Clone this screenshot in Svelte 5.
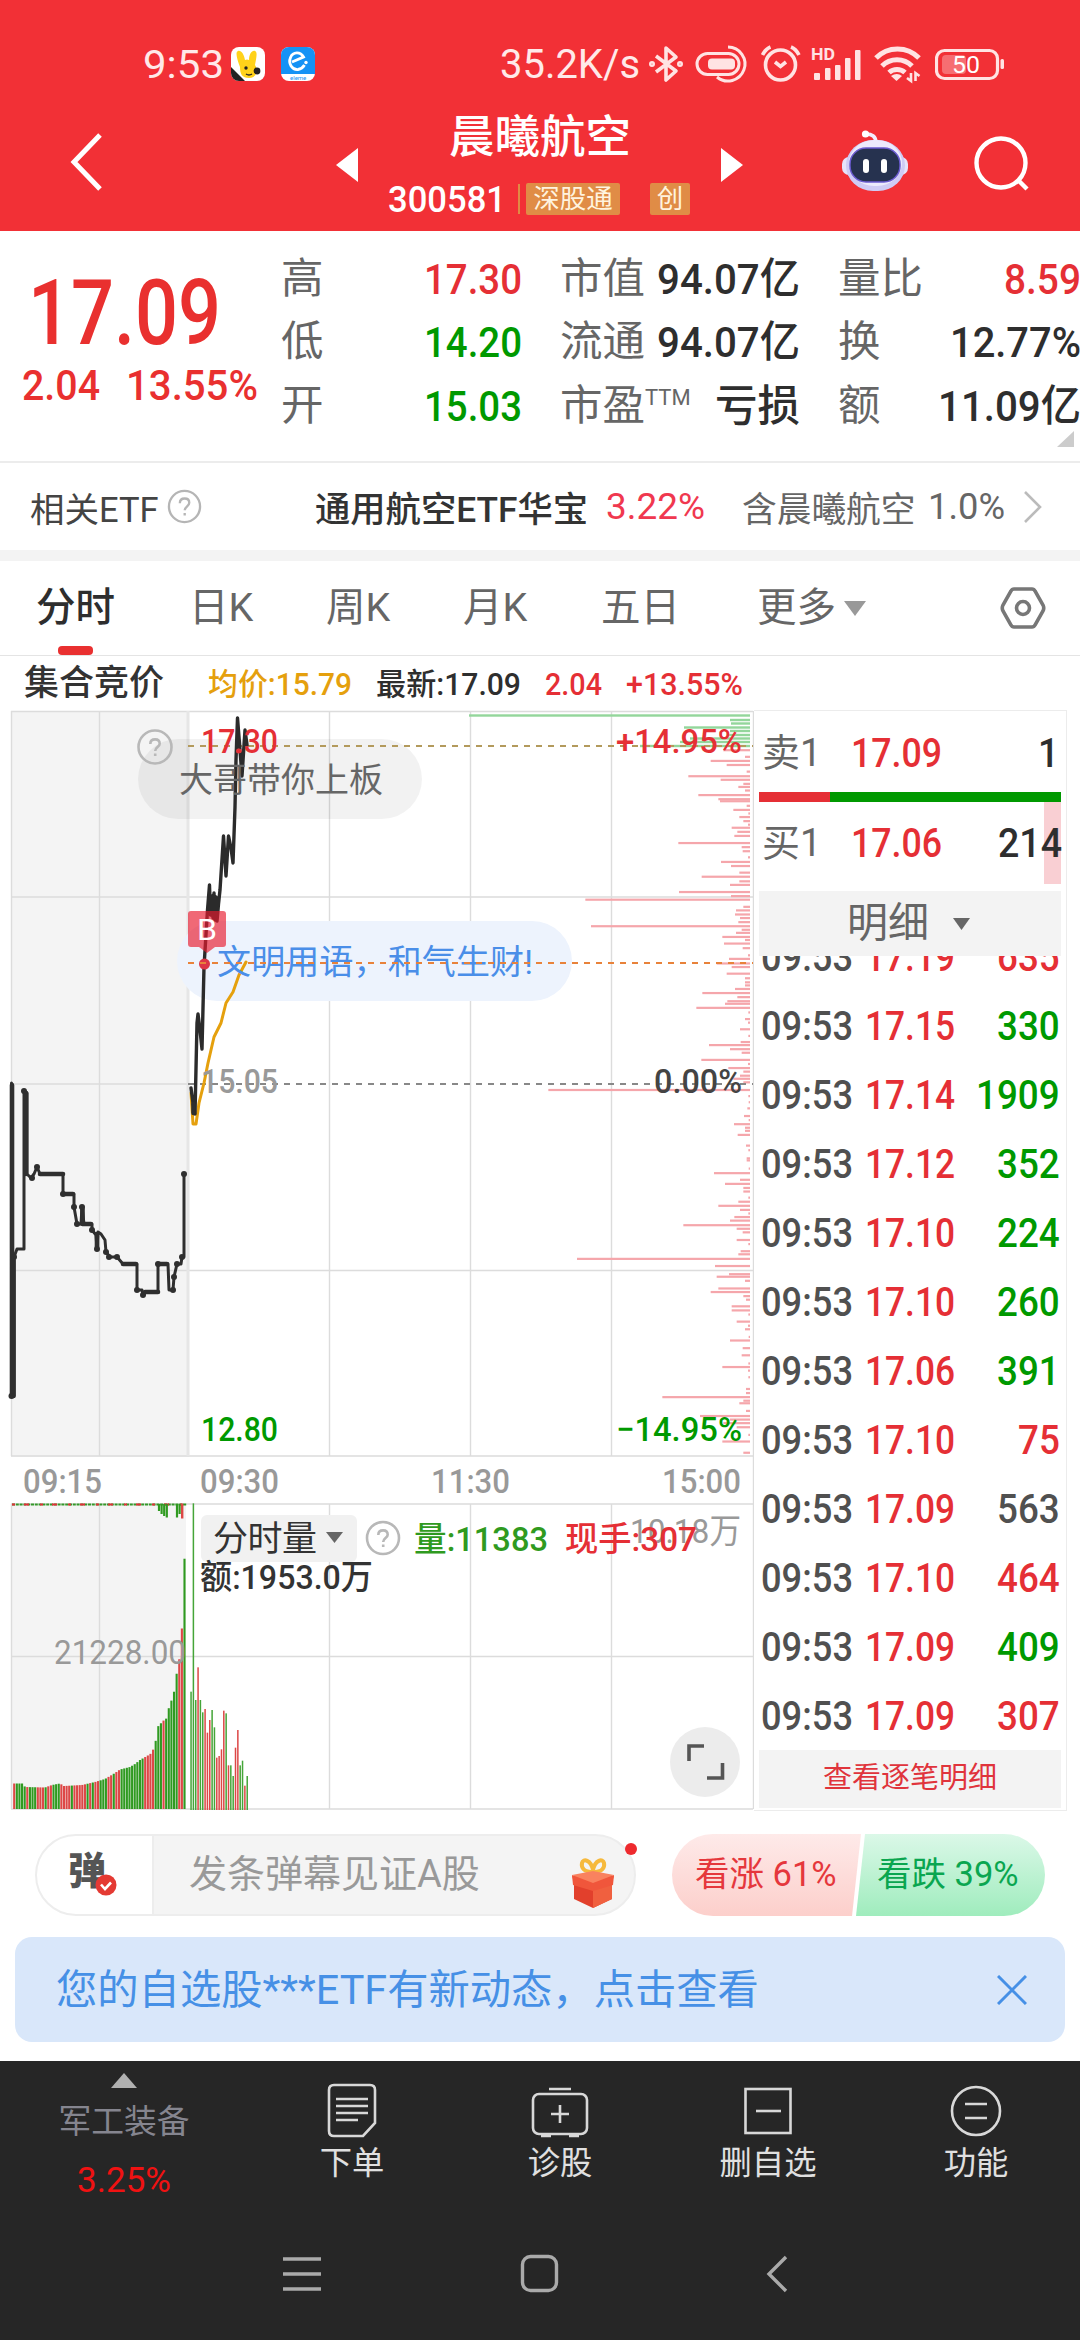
<script lang="ts">
type Tone = "up" | "down" | "flat";

interface Quote {
	label: string;
	sup?: string;
	value: string;
	width: number;
	tone: Tone;
}

const quoteColumns: Quote[][] = [
	[
		{ label: "高", value: "17.30", width: 98, tone: "up" },
		{ label: "低", value: "14.20", width: 98, tone: "down" },
		{ label: "开", value: "15.03", width: 98, tone: "down" },
	],
	[
		{ label: "市值", value: "94.07亿", width: 143, tone: "flat" },
		{ label: "流通", value: "94.07亿", width: 143, tone: "flat" },
		{ label: "市盈", sup: "TTM", value: "亏损", width: 85, tone: "flat" },
	],
	[
		{ label: "量比", value: "8.59", width: 77, tone: "up" },
		{ label: "换", value: "12.77%", width: 131, tone: "flat" },
		{ label: "额", value: "11.09亿", width: 143, tone: "flat" },
	],
];

const tabs = ["分时", "日K", "周K", "月K", "五日"];

const trades: [string, number, Tone][] = [
	["17.19", 635, "up"],
	["17.15", 330, "down"],
	["17.14", 1909, "down"],
	["17.12", 352, "down"],
	["17.10", 224, "down"],
	["17.10", 260, "down"],
	["17.06", 391, "down"],
	["17.10", 75, "up"],
	["17.09", 563, "flat"],
	["17.10", 464, "up"],
	["17.09", 409, "down"],
	["17.09", 307, "up"],
];

// price / average lines, in page units (the chart viewBox starts at y=710)
const auctionLine =
	"11.5,1083 11.5,1396 14,1396 14,1257 17,1249 24,1249 24,1091 27,1093 27,1174 31,1178 34,1174 37,1167 40,1174 63,1174 63,1194 74,1194 74,1207 77,1224 81,1224 82,1207 84,1224 92,1224 92,1230 96,1235 97,1249 98,1232 101,1234 105,1240 106,1252 110,1257 117,1257 123,1264 137,1264 137,1290 142,1290 143,1295 146,1292 158,1292 158,1264 168,1264 169,1290 173,1290 174,1277 177,1264 181,1264 182,1257 184,1257 184,1174";
const auctionDots = [
	[11.5, 1396], [14, 1257], [24, 1091], [32, 1178], [37, 1167], [63, 1194], [74, 1207], [77, 1224],
	[82, 1207], [92, 1230], [97, 1249], [106, 1252], [109, 1257], [117, 1257], [137, 1290], [143, 1295],
	[158, 1264], [173, 1290], [174, 1277], [177, 1264], [182, 1257], [184, 1174],
];
const priceLine =
	"191,1088 193,1103 195,1114 197,1023 198,1014 200,1030 202,1049 204,967 207.5,910 209.5,885 210.5,915 212,896 213,918 214,893 215,920 216,897 217,921 218.5,904 220,890 223.5,836 226,876 228.5,836 231,848 233,863 235,807 236,760 237.5,718 240,750 242,776 245,730 247,745";
const averageLine =
	"191,1093 193,1124 196,1124 199,1103 204,1083 208,1063 214,1037 221,1023 226,1003 233,992 239,975 246,962";

// chip distribution: [y, left edge]
const chipsGreen = [
	[715.5, 469], [720, 730], [723.5, 731], [727.5, 684], [731, 730], [735, 728], [738.5, 690], [742, 680], [746, 640],
];
const chipsRaw =
	"118:970 131:1035 139:932 147:980 160:1040 169:865 176:962 184:1030 190:1015 197:1035 206:895 214:955 218:960 227:1040 235:1000 242:1045 249:1018 257:1030 264:1044 270:995 278:1012 286:1003 300:835 308:1025 316:1028 328:1044 337:963 345:993 358:1018 366:905 375:1018 382:990 396:837 404:993 411:556 425:1030 432:1008 440:1005 447:1020 455:1015 463:573 470:1025 476:1008 484:967 490:1035 497:972 506:1028 520:1044 527:987 536:950 543:995 556:980 565:1035 573:1035 579:1035 586:1005 594:907 602:1012 610:982 615:975 623:889 632:1045 645:1035 652:1044 665:1020 678:1045 690:1022 696:927 704:990 711:1025 725:904 733:1044 741:985 748:1030 756:1020 762:1000 769:1030 784:445 796:1045 808:1046 820:1042 835:1032 843:1046 851:1002 858:1035 864:1035 872:1013 893:1038 902:1045 918:1040 922:1040 938:1046 947:942 960:1020 968:975 976:1030 983:1030 995:1045 1003:1015 1011:955 1019:1020 1026:1045 1033:1003 1040:990 1049:850 1056:1010 1063:1028 1078:1010 1086:1045 1100:1022 1106:1015 1115:531 1129:945 1145:987 1150:950 1158:1035 1173:955 1180:932 1188:1030 1195:1038 1208:995 1216:995 1224:1045 1238:1010 1246:1044 1253:1035 1268:1046 1275:990 1290:1028 1304:1025 1320:1045 1327:967 1334:1044 1347:1045 1370:1038 1378:1038 1386:787 1393:1030 1398:1018 1413:1038 1423:900 1430:990 1437:970 1445:1010 1460:1045 1473:967 1495:1030";
const chipsRed = chipsRaw.split(" ").map((pair) => {
	const [y, x] = pair.split(":").map(Number);
	return [690 + y / 1.96, 400 + x / 3];
});

// auction volume, curve anchors interpolated to one bar each 2.62px
const volumeAnchors = [
	[12, 1783.5], [23, 1783.5], [25, 1787], [45, 1787.5], [52, 1785], [60, 1783.5], [64, 1786], [82, 1785], [95, 1782],
	[105, 1779], [115, 1773], [120, 1769.5], [130, 1767], [135, 1764], [140, 1760], [147, 1756], [151, 1753.5],
	[155, 1746], [157.5, 1727], [163, 1721], [167, 1718], [169, 1707], [172, 1699], [174.5, 1690], [177, 1671],
	[179.5, 1658], [182, 1627], [184.6, 1556],
];
const volumeTones = "rgrrggggrgggrrrgrrgggrrrrgrrrrrgrgrrgggrrgrrgggggggggrrrrgggrgggggrrg";

function volumeTop(x: number) {
	for (let i = 1; i < volumeAnchors.length; i++) {
		const [x0, y0] = volumeAnchors[i - 1];
		const [x1, y1] = volumeAnchors[i];
		if (x <= x1) return y0 + ((y1 - y0) * (x - x0)) / (x1 - x0);
	}
	return volumeAnchors[volumeAnchors.length - 1][1];
}

const auctionVolume = Array.from({ length: 66 }, (_, i) => {
	const x = 14.2 + i * 2.62;
	return { x, y: volumeTop(x), up: volumeTones[i + 3] === "r" };
});

const minuteVolume =
	"635g 70g 660g 562r 660g 697g 687r 758r 720r 690g 742g 833r 828r 808r 692r 700g 856r 856g 888g 803r 750r 856g 842g 917r 888g"
		.split(" ")
		.map((s, i) => ({ x: 191 + i * 2.34, y: 1480 + parseInt(s) / 3, up: s.endsWith("r") }));

const unmatched = [
	[159, 1511], [161.6, 1514], [164.2, 1516], [166.8, 1517.5], [177, 1517.5], [179.6, 1514], [184.4, 1505],
];

const actions = ["下单", "诊股", "删自选", "功能"];
</script>

{#snippet num(text: string, width: number, size: number, cls = "")}
  <svg class="num {cls}" {width} height={size * 1.2} viewBox="0 0 {width} {size * 1.2}">
    <text y={size * 0.955} font-size={size} textLength={width} lengthAdjust="spacingAndGlyphs">{text}</text>
  </svg>
{/snippet}

{#snippet help(size: number)}
  <svg class="help" width={size} height={size} viewBox="0 0 36 36">
    <circle cx="18" cy="18" r="16" />
    <path d="M13.2 14.6c0-3 2-4.8 4.9-4.8s4.8 1.8 4.8 4.4c0 3.4-4.6 3.8-4.6 7.6M18.2 24.6v2.6" />
  </svg>
{/snippet}

<main class="screen">
  <header class="header">
    <div class="status">
      <div class="status-left">
        {@render num("9:53", 81, 39)}
        <svg class="app-icon" width="34" height="34" viewBox="0 0 34 34">
          <rect width="34" height="34" rx="8" fill="#fff" />
          <path d="M0 20L14 34H8a8 8 0 0 1-8-8z" fill="#222" />
          <path d="M9 20C6 12 4 5 7 4s6 3 7 9q2-.8 4 0c0-6 3-10 6-9s1 8 0 14c4 6 1 13-6 13S9 27 9 20z" fill="#ffd21a" />
          <circle cx="15" cy="21" r="1.7" fill="#222" /><circle cx="26" cy="24" r="3.4" fill="#222" />
          <path d="M15 27q3 2 6 0" stroke="#222" stroke-width="1.4" fill="none" />
        </svg>
        <svg class="app-icon" width="34" height="34" viewBox="0 0 34 34">
          <rect width="34" height="34" rx="8" fill="#fff" />
          <path d="M0 27V8a8 8 0 0 1 8-8h18a8 8 0 0 1 8 8v19z" fill="#1592f5" />
          <path d="M11 15l11.500-5C19.500 4.500 12 4.500 9.500 10.500S11 23 17 22.500c3-.5 5-2 6.500-4.500" fill="none" stroke="#fff" stroke-width="2.800" />
          <circle cx="25" cy="15.500" r="1.700" fill="#fff" />
          <text x="9" y="33" font-size="6" fill="#1592f5">eleme</text>
        </svg>
      </div>
      <div class="status-right">
        {@render num("35.2K/s", 140, 40)}
        <svg class="gap-bt" width="40" height="42" viewBox="0 0 40 42" fill="none" stroke="#ffe3e3" stroke-width="3.600" stroke-linejoin="round">
          <path d="M8 13l20 15-10 9V5l10 9L8 29" /><circle cx="4" cy="21" r="1.200" /><circle cx="32" cy="21" r="1.200" />
        </svg>
        <svg class="gap-a" width="54" height="42" viewBox="0 0 54 42" fill="none" stroke="#ffe3e3" stroke-width="3">
          <rect x="2" y="10.500" width="42" height="21" rx="10.500" /><path d="M33 4a17 17 0 1 1-11 30" />
          <rect x="13" y="15.500" width="27" height="11" rx="4" fill="#ffe3e3" stroke="none" />
        </svg>
        <svg class="gap-b" width="42" height="42" viewBox="0 0 42 42" fill="none" stroke="#ffe3e3" stroke-width="3.600">
          <circle cx="19.500" cy="22" r="15" /><path d="M14 19l5.500 4.500 5.500-4.500M1.500 12q3-6 8-8M38 12q-3-6-8-8" />
        </svg>
        <svg class="gap-c" width="52" height="42" viewBox="0 0 52 42">
          <g fill="#ffe3e3"><rect x="3" y="30" width="6" height="7" rx="1" /><rect x="14" y="25" width="5.500" height="12" rx="1" /><rect x="24" y="22" width="5.500" height="15" rx="1" /><rect x="34" y="15" width="5.500" height="22" rx="1" /><rect x="44" y="7" width="5.500" height="30" rx="1" /></g>
          <text x="0" y="17" font-size="17" font-weight="700" fill="#ffe3e3" textLength="24" lengthAdjust="spacingAndGlyphs">HD</text>
        </svg>
        <svg class="gap-w" width="48" height="42" viewBox="0 0 48 42" fill="none" stroke="#ffe3e3" stroke-width="5">
          <path d="M2 15a30 30 0 0 1 43 0M8 23a21 21 0 0 1 30 0" />
          <path d="M15 29.500a12 12 0 0 1 16 0" /><path d="M17 33q6-4 11 0l-5.500 5z" fill="#ffe3e3" stroke="none" />
          <path d="M37 30v8l-4-3M41.500 38v-8l4 3" stroke-width="2.600" />
        </svg>
        <svg class="gap-d" width="70" height="42" viewBox="0 0 70 42">
          <rect x="1.500" y="7.500" width="61" height="28" rx="8" fill="none" stroke="#ffe3e3" stroke-width="3.200" />
          <rect x="7" y="12" width="24" height="19" rx="4" fill="#fff" opacity=".3" /><rect x="65.500" y="16" width="3.500" height="10" rx="1.500" fill="#ffe3e3" />
          <text x="17" y="30" font-size="24" fill="#fff" textLength="28" lengthAdjust="spacingAndGlyphs">50</text>
        </svg>
      </div>
    </div>

    <div class="titlebar">
      <svg class="back" width="36" height="62" viewBox="0 0 36 62"><path d="M31 4L5 31l26 27" /></svg>
      <svg class="prev" width="22" height="34" viewBox="0 0 22 34"><path d="M22 0v34L0 17z" /></svg>
      <div class="stock">
        <h1>晨曦航空</h1>
        <div class="code">
          {@render num("300581", 118, 37, "medium")}
          <i class="code-line"></i>
          <span class="tag">深股通</span>
          <span class="tag tag-cy">创</span>
        </div>
      </div>
      <svg class="next" width="22" height="34" viewBox="0 0 22 34"><path d="M0 0v34L22 17z" /></svg>
      <svg class="robot" width="68" height="64" viewBox="0 0 68 64">
        <path d="M35 14C35 7 31 5 25 5" fill="none" stroke="#f4eefe" stroke-width="3.600" stroke-linecap="round" />
        <circle cx="24.500" cy="5" r="3.600" fill="#fff" />
        <rect x="1" y="28" width="66" height="18" rx="7" fill="#e6e3fb" />
        <rect x="5" y="11" width="59" height="51" rx="27" fill="#cfcbf5" />
        <rect x="8" y="11" width="53" height="46" rx="25" fill="#eceafc" />
        <rect x="9" y="19" width="50" height="34" rx="16" fill="#26324f" stroke="#6a5bd0" stroke-width="1.500" />
        <rect x="22" y="30" width="6" height="14" rx="3" fill="#fff" /><rect x="40" y="30" width="6" height="14" rx="3" fill="#fff" />
      </svg>
      <svg class="search" width="60" height="60" viewBox="0 0 60 60"><circle cx="29" cy="29" r="24.500" /><path d="M46 46l9 9" /></svg>
    </div>
  </header>

  <section class="quote">
    <div class="price">
      {@render num("17.09", 193, 90, "medium")}
      <div class="change">
        {@render num("2.04", 78, 42, "medium")}
        {@render num("13.55%", 132, 42, "medium")}
      </div>
    </div>
    {#each quoteColumns as column}
      <div class="quote-col">
        {#each column as q}
          <div class="quote-row">
            <span class="quote-label">{q.label}{#if q.sup}<sup>{q.sup}</sup>{/if}</span>
            {@render num(q.value, q.width, 43, `medium ${q.tone}`)}
          </div>
        {/each}
      </div>
    {/each}
    <svg class="corner" width="17" height="16" viewBox="0 0 17 16"><path d="M17 0v16H0z" fill="#ccc" /></svg>
  </section>

  <section class="etf">
    <span class="etf-title">相关ETF</span>
    {@render help(35)}
    <strong>通用航空ETF华宝</strong>
    {@render num("3.22%", 99, 37, "pink")}
    <span class="etf-hold">含晨曦航空</span>
    {@render num("1.0%", 77, 37, "gray")}
    <svg class="etf-more" width="20" height="34" viewBox="0 0 20 34"><path d="M2 2l15 15L2 32" /></svg>
  </section>

  <nav class="tabs">
    {#each tabs as tab, i}
      <span class="tab" class:active={i === 0}>{tab}</span>
    {/each}
    <span class="tab more">更多<svg width="22" height="15" viewBox="0 0 22 15"><path d="M0 0h22L11 15z" fill="#999" /></svg></span>
    <svg class="setting" width="46" height="44" viewBox="0 0 46 44">
      <path d="M14 3h18q2 0 3 2l8 14q1.500 3 0 6l-8 14q-1 2-3 2H14q-2 0-3-2L3 25q-1.500-3 0-6l8-14q1-2 3-2z" /><circle cx="23" cy="22" r="6.500" />
    </svg>
  </nav>

  <div class="summary">
    <span class="summary-title">集合竞价</span>
    {@render num("均价:15.79", 144, 31, "medium avg")}
    {@render num("最新:17.09", 145, 31, "medium flat")}
    {@render num("2.04", 57, 31, "medium up")}
    {@render num("+13.55%", 117, 31, "medium up")}
  </div>

  <section class="board">
    <svg class="chart" width="754" height="1102" viewBox="0 710 754 1102">
      <rect x="11" y="711" width="178" height="746" fill="#f4f4f4" />
      <rect x="11" y="1504" width="175" height="305" fill="#f4f4f4" />
      <g class="grid">
        <path d="M11 711.500H753M11 897H753M11 1084H189M11 1270.500H753M11 1456H753" />
        <path d="M11.500 711V1456M99.500 711V1456M329.500 711V1456M470.500 711V1456M611.500 711V1456" />
        <path d="M11 1504H753M11 1656.500H753M11 1809H753M11.500 1504V1809M99.500 1504V1809M329.500 1504V1809M470.500 1504V1809M611.500 1504V1809" />
        <path class="session" d="M188 711V1456" />
        <path d="M753.500 711V1809" />
      </g>

      {#each chipsGreen as [y, x]}
        <rect {x} y={y - 1.2} width={750 - x} height="2.4" fill="#93d69b" />
      {/each}
      {#each chipsRed as [y, x]}
        <rect {x} y={y - 1.1} width={750 - x} height="2.2" fill="#f5a6ab" />
      {/each}

      <!-- danmaku bubbles -->
      <rect x="138" y="739" width="284" height="80" rx="40" fill="#000" opacity=".05" />
      <rect x="177" y="921" width="395" height="80" rx="40" fill="#edf3fd" />

      <path class="dash" d="M188 746H753" stroke="#b39a5c" />
      <path class="dash" d="M188 1084H753" stroke="#888" />

      <g class="trend">
        <polyline points={averageLine} stroke="#e5a00d" stroke-width="3" />
        <polyline points={priceLine} stroke="#2b2b2b" stroke-width="3.4" />
        <polyline points={auctionLine} stroke="#2f2f2f" stroke-width="3" />
        <path d="M12 1085V1396M13.500 1260V1396M26 1093V1174M40 1174H63M63 1194H73M82.500 1209V1224M123 1264H136M145 1292H158M158 1264H167M83 1224H91M97 1234V1247M193.500 1104V1113" stroke="#2f2f2f" stroke-width="4.600" />
      </g>
      {#each auctionDots as [cx, cy]}
        <circle {cx} {cy} r="3" fill="#2f2f2f" />
      {/each}

      <g class="mark">
        <path d="M191 911h32a3 3 0 0 1 3 3v30a3 3 0 0 1-3 3h-8l-8 6-8-6h-8a3 3 0 0 1-3-3v-30a3 3 0 0 1 3-3z" fill="#e8192c" fill-opacity=".65" />
        <text x="197" y="940" font-size="29" textLength="20" lengthAdjust="spacingAndGlyphs" fill="#fff">B</text>
        <circle cx="204.500" cy="964" r="5.500" fill="#dc3545" />
        <circle cx="238.500" cy="751" r="2.500" fill="#e3353b" />
      </g>

      <g class="axis" font-size="34">
        <text x="201" y="753" textLength="77" lengthAdjust="spacingAndGlyphs" class="up">17.30</text>
        <text x="201" y="1093" textLength="77" lengthAdjust="spacingAndGlyphs" fill="#999">15.05</text>
        <text x="201" y="1441" textLength="77" lengthAdjust="spacingAndGlyphs" class="down">12.80</text>
        <text x="616" y="753" textLength="126" lengthAdjust="spacingAndGlyphs" class="up">+14.95%</text>
        <text x="654" y="1093" textLength="88" lengthAdjust="spacingAndGlyphs" fill="#444">0.00%</text>
        <text x="616" y="1441" textLength="126" lengthAdjust="spacingAndGlyphs" class="down">−14.95%</text>
      </g>
      <g class="axis" font-size="33" fill="#999">
        <text x="23" y="1493" textLength="79" lengthAdjust="spacingAndGlyphs">09:15</text>
        <text x="200" y="1493" textLength="79" lengthAdjust="spacingAndGlyphs">09:30</text>
        <text x="431" y="1493" textLength="79" lengthAdjust="spacingAndGlyphs">11:30</text>
        <text x="662" y="1493" textLength="79" lengthAdjust="spacingAndGlyphs">15:00</text>
      </g>

      <text x="179" y="792" font-size="34" textLength="204" fill="#666">大哥带你上板</text>
      <text x="217" y="974" font-size="34" textLength="316" fill="#4a8ee8">文明用语，和气生财!</text>
      <path class="dash" d="M188 963H753" stroke="#e8823a" />

      <g class="question">
        <circle cx="155" cy="747" r="16.500" />
        <path d="M150.300 744c0-3 2-4.600 4.800-4.600s4.600 1.800 4.600 4.300c0 3.300-4.500 3.600-4.500 7.300M155.200 753.500v2.500" />
      </g>

      <!-- volume -->
      <path d="M12 1504.500H187" stroke="#359a2a" stroke-width="2" stroke-dasharray="3 .8" />
      <path d="M12 1504.500H187" stroke="#e03038" stroke-width="2" stroke-dasharray="3 9 5 11" />
      {#each auctionVolume as bar}
        <rect x={bar.x - 1.05} y={bar.y} width="2.1" height={1809 - bar.y} fill={bar.up ? "#dd4746" : "#2f9a20"} />
      {/each}
      {#each unmatched as [x, y]}
        <rect x={x - 1.1} y="1504" width="2.2" height={y - 1504} fill="#2f9a20" />
      {/each}
      <rect x="181" y="1504" width="2.4" height="14.500" fill="#dd4746" />
      {#each minuteVolume as bar}
        <rect x={bar.x - 0.7} y={bar.y} width="1.5" height={1810 - bar.y} fill={bar.up ? "#dd4746" : "#45a538"} />
      {/each}

      <rect x="201" y="1515" width="156" height="47" rx="6" fill="#f1f1f1" />
      <text x="213" y="1551" font-size="35" textLength="104" fill="#333">分时量</text>
      <path d="M326 1532h17l-8.500 11z" fill="#666" />
      <g class="question">
        <circle cx="383" cy="1538" r="16" />
        <path d="M378.300 1535c0-3 2-4.600 4.800-4.600s4.600 1.800 4.600 4.300c0 3.300-4.500 3.600-4.500 7.300M383.200 1544.500v2.500" />
      </g>
      <g class="axis" font-size="34">
        <text x="630" y="1543" textLength="111" lengthAdjust="spacingAndGlyphs" class="regular" fill="#999">10.18万</text>
        <text x="414" y="1551" textLength="134" lengthAdjust="spacingAndGlyphs" fill="#2f9a20">量:11383</text>
        <text x="565" y="1551" textLength="132" lengthAdjust="spacingAndGlyphs" class="up">现手:307</text>
        <text x="200" y="1589" textLength="173" lengthAdjust="spacingAndGlyphs" fill="#333">额:1953.0万</text>
        <text x="54" y="1664" textLength="132" lengthAdjust="spacingAndGlyphs" class="regular" fill="#999">21228.00</text>
      </g>
      <circle cx="705" cy="1762" r="35" fill="#ececec" />
      <path d="M689 1761v-15h15M707 1778h15.500v-15" fill="none" stroke="#555" stroke-width="3.600" />
    </svg>

    <aside class="depth">
      <div class="level">
        <span>卖1</span>
        {@render num("17.09", 91, 40, "medium up")}
        <b class="level-vol">{@render num("1", 21, 40, "medium flat")}</b>
      </div>
      <div class="ratio"><i></i></div>
      <div class="level bid">
        <span>买1</span>
        {@render num("17.06", 91, 40, "medium up")}
        <b class="level-vol">{@render num("214", 64, 40, "medium flat")}</b>
      </div>
      <div class="detail-head">明细<svg width="17" height="12" viewBox="0 0 17 12"><path d="M0 0h17L8.500 12z" fill="#666" /></svg></div>
      <div class="trades">
        {#each trades as [price, volume, tone]}
          <div class="trade">
            {@render num("09:53", 92, 40, "medium time")}
            {@render num(price, 90, 40, "medium up")}
            {@render num(String(volume), String(volume).length * 20.9, 40, `medium ${tone === "flat" ? "time" : tone}`)}
          </div>
        {/each}
      </div>
      <div class="detail-foot">查看逐笔明细</div>
    </aside>
  </section>

  <section class="interact">
    <div class="barrage">
      <div class="barrage-toggle">弹
        <svg width="22" height="22" viewBox="0 0 22 22"><circle cx="11" cy="11" r="10.500" fill="#e43a33" /><path d="M6 10.500l4 4.500 6-6.500" fill="none" stroke="#fff" stroke-width="2.600" /></svg>
      </div>
      <div class="barrage-input">发条弹幕见证A股</div>
      <svg class="gift" width="48" height="52" viewBox="0 0 48 52">
        <path d="M24 15C15 15 12 11 13 6s9-3 11 7c2-10 10-12 11-7s-2 9-11 9z" fill="none" stroke="#f6b93c" stroke-width="4" />
        <path d="M3 19l21-4 21 4-3 9H6z" fill="#f4573a" /><path d="M5 25l19 6 19-6v17l-19 9-19-9z" fill="#e2402c" /><path d="M24 30l19-5v17l-19 9z" fill="#f0603f" /><path d="M3 18l21 8 21-8-1 10-20 6-20-6z" fill="#f0563b" /><path d="M3 18l21-4 21 4-21 8z" fill="#f9825f" />
      </svg>
      <i class="badge"></i>
    </div>
    <div class="vote">
      <div class="vote-up">看涨 61%</div>
      <div class="vote-down">看跌 39%</div>
    </div>
  </section>

  <div class="notice">
    <span>您的自选股***ETF有新动态，点击查看</span>
    <svg width="30" height="30" viewBox="0 0 30 30"><path d="M1 1l28 28M29 1L1 29" /></svg>
  </div>

  <footer class="footer">
    <div class="toolbar">
      <div class="sector">
        <svg width="26" height="15" viewBox="0 0 26 15"><path d="M13 0l13 15H0z" fill="#b0b0b0" /></svg>
        <span>军工装备</span>
        <em>3.25%</em>
      </div>
      {#each actions as action, i}
        <div class="action">
          <svg width="60" height="56" viewBox="0 0 60 56">
            {#if i === 0}
              <path d="M12 2h36q5 0 5 5v33l-12 13H12q-5 0-5-5V7q0-5 5-5z" /><path d="M14 16h32M14 23h32M14 30h32M14 37h22" />
            {:else if i === 1}
              <rect x="3" y="11" width="54" height="40" rx="6" /><path d="M19 6h22M30 22v18M21 31h18M11 53h10M39 53h10" />
            {:else if i === 2}
              <rect x="7.500" y="6" width="45" height="44" /><path d="M18 28h25" />
            {:else}
              <circle cx="30" cy="28" r="24" /><path d="M19 21h22M19 35h22" />
            {/if}
          </svg>
          <span>{action}</span>
        </div>
      {/each}
    </div>
    <div class="sysnav">
      <svg width="38" height="40" viewBox="0 0 38 40"><path d="M0 5h38M0 20h38M0 35h38" /></svg>
      <svg width="40" height="40" viewBox="0 0 40 40"><rect x="2.500" y="2.500" width="34" height="34" rx="8" /></svg>
      <svg width="22" height="40" viewBox="0 0 22 40"><path d="M20 3L3 20l17 17" /></svg>
    </div>
  </footer>
</main>

<style>
  :global(body) {
    background: #fff;
  }

  .screen {
    width: 1080px;
    height: 2340px;
    overflow: hidden;
    display: flex;
    flex-direction: column;
    font-family: Roboto, "Noto Sans CJK SC", sans-serif;
    color: #333;
    background: #fff;
  }

  .screen svg {
    display: block;
    flex-shrink: 0;
  }

  .num {
    overflow: visible;
    fill: currentColor;
  }
  .medium { font-weight: 500; }
  .up { color: #e52f35; fill: #e52f35; }
  .down { color: #009900; fill: #009900; }
  .flat { color: #2e2e2e; fill: #2e2e2e; }
  .time { color: #505050; fill: #505050; }
  .pink { color: #f0384f; }
  .gray { color: #666; }
  .avg { color: #e5a00d; }

  .help {
    fill: none;
    stroke: #b5b5b5;
    stroke-width: 2.4;
  }

  /* header */
  .header {
    height: 231px;
    background: #f23036;
    color: #fff;
    flex-shrink: 0;
  }
  .status {
    height: 86px;
    padding: 43px 75px 0 143px;
    box-sizing: border-box;
    display: flex;
    justify-content: space-between;
    color: #ffe9e9;
  }
  .status-left, .status-right {
    display: flex;
    align-items: center;
    height: 42px;
  }
  .app-icon { margin-left: 7px; }
  .app-icon + .app-icon { margin-left: 16px; }
  .gap-bt { margin-left: 8px; }
  .gap-a { margin-left: 7px; }
  .gap-b { margin-left: 12px; }
  .gap-c { margin-left: 8px; }
  .gap-w { margin-left: 11px; }
  .gap-d { margin-left: 13px; }

  .titlebar {
    display: flex;
    height: 145px;
    fill: #fff;
  }
  .back {
    margin: 45px 0 0 69px;
    fill: none;
    stroke: #fff;
    stroke-width: 5;
  }
  .prev { margin: 62px 0 0 231px; }
  .next { margin: 62px 0 0 29px; }
  .stock {
    width: 304px;
    margin-left: 30px;
  }
  .stock h1 {
    margin: 19px 0 0;
    font-size: 45.5px;
    line-height: 66px;
    font-weight: 500;
    text-align: center;
  }
  .code {
    display: flex;
    align-items: center;
    height: 32px;
    margin-top: 12px;
  }
  .code-line {
    width: 2px;
    height: 30px;
    margin: 0 6px 0 12px;
    background: #e08a44;
  }
  .tag {
    width: 94px;
    height: 32px;
    line-height: 31px;
    font-size: 26.5px;
    text-align: center;
    background: #e08c46;
    color: #fff3df;
    border-radius: 2px;
  }
  .tag-cy {
    width: 40px;
    margin-left: 30px;
  }
  .robot { margin: 43px 0 0 98px; }
  .search {
    margin: 48px 0 0 63px;
    fill: none;
    stroke: #fff;
    stroke-width: 4.4;
  }

  /* quote */
  .quote {
    position: relative;
    height: 232px;
    box-sizing: border-box;
    border-bottom: 2px solid #ececec;
    display: grid;
    grid-template-columns: 281px 241px 278px 242px;
    flex-shrink: 0;
  }
  .price {
    color: #e9302f;
    padding: 27px 0 0 28px;
  }
  .change {
    display: flex;
    gap: 26px;
    margin: -6px 0 0 -6px;
  }
  .quote-col {
    padding-top: 16px;
  }
  .quote-col + .quote-col { padding-left: 38px; }
  .quote-row {
    display: flex;
    justify-content: space-between;
    align-items: center;
    height: 63.5px;
  }
  .quote-label {
    font-size: 42.5px;
    line-height: 62px;
    color: #666;
    white-space: nowrap;
  }
  .quote-label sup {
    font-size: 22px;
    line-height: 1;
    vertical-align: 15px;
  }
  .quote-col:nth-child(4) { margin-right: -39px; }
  .corner {
    position: absolute;
    right: 6px;
    bottom: 14px;
  }

  /* etf */
  .etf {
    display: flex;
    align-items: center;
    height: 98px;
    box-sizing: border-box;
    padding: 0 35px 0 30px;
    border-bottom: 11px solid #f3f3f3;
    flex-shrink: 0;
    white-space: nowrap;
  }
  .etf-title {
    font-size: 34.5px;
    color: #444;
    margin-right: 7px;
    width: 130px;
  }
  .etf strong {
    font-size: 35.3px;
    font-weight: 500;
    width: 276px;
    margin-left: 113px;
    margin-right: 15px;
  }
  .etf-hold {
    font-size: 34.7px;
    color: #666;
    margin: 0 13px 0 37px;
  }
  .etf-more {
    margin-left: 18px;
    fill: none;
    stroke: #bbb;
    stroke-width: 2.6;
  }

  /* tabs */
  .tabs {
    display: flex;
    height: 95px;
    box-sizing: border-box;
    border-bottom: 1px solid #e4e4e4;
    padding-left: 36px;
    font-size: 39.5px;
    line-height: 94px;
    color: #666;
    flex-shrink: 0;
  }
  .tab { width: 137px; }
  .tab:nth-child(1) { width: 153px; }
  .tab.active {
    color: #2e2e2e;
    font-weight: 500;
    display: flex;
    flex-direction: column;
  }
  .tab.active::after {
    content: "";
    width: 35px;
    height: 9px;
    border-radius: 4px;
    background: #e93030;
    margin: -9px 0 0 22px;
  }
  .tab:nth-child(4) { width: 138px; }
  .tab:nth-child(5) { width: 156px; }
  .tab.more {
    display: flex;
    align-items: center;
    gap: 8px;
    width: 243px;
  }
  .setting {
    margin-top: 25px;
    fill: none;
    stroke: #777;
    stroke-width: 3.6;
  }

  .summary {
    display: flex;
    align-items: center;
    height: 55px;
    padding-left: 24px;
    flex-shrink: 0;
  }
  .summary-title {
    font-size: 35px;
    line-height: 55px;
    width: 184px;
    font-weight: 500;
  }
  .summary svg + svg { margin-left: 24px; }

  /* chart + depth */
  .board {
    display: flex;
    height: 1102px;
    margin-top: -1px;
    flex-shrink: 0;
  }
  .grid path {
    fill: none;
    stroke: #dcdcdc;
    stroke-width: 1.4;
  }
  .grid .session {
    stroke: #e6e6e6;
    stroke-width: 3;
  }
  .dash {
    stroke-width: 1.8;
    stroke-dasharray: 6 6;
  }
  .trend {
    fill: none;
    stroke-linejoin: round;
    stroke-linecap: round;
  }
  .axis { font-weight: 500; }
  .axis .regular { font-weight: 400; }
  .question {
    fill: none;
    stroke: #b8b8b8;
    stroke-width: 2.6;
  }

  .depth {
    width: 302px;
    height: 1099px;
    padding: 0 5px;
    border: 1px solid #ececec;
    border-left: 0;
    display: flex;
    flex-direction: column;
  }
  .level {
    display: flex;
    align-items: center;
    height: 81px;
    box-sizing: border-box;
    padding: 3px 0 0 3px;
    font-size: 38px;
    line-height: 76px;
    color: #666;
  }
  .level span { width: 89px; }
  .level-vol {
    margin-left: auto;
    padding-right: 2px;
  }
  .ratio {
    height: 10px;
    background: #009900;
    flex-shrink: 0;
  }
  .ratio i {
    display: block;
    width: 71px;
    height: 10px;
    background: #e52f35;
  }
  .bid {
    height: 82px;
    padding-top: 0;
    margin-bottom: 7px;
    background: linear-gradient(to left, #f9cfd3 17px, transparent 17px);
  }
  .bid .level-vol { padding-right: 0; margin-right: -1px; }
  .detail-head {
    height: 65px;
    flex-shrink: 0;
    background: #f3f3f3;
    color: #666;
    font-size: 41px;
    line-height: 63px;
    display: flex;
    align-items: center;
    gap: 24px;
    padding-left: 88px;
  }
  .trades {
    height: 794px;
    overflow: hidden;
    display: flex;
    flex-direction: column;
    justify-content: flex-end;
  }
  .trade {
    height: 69px;
    flex-shrink: 0;
    display: grid;
    grid-template-columns: 104px 91px 1fr;
    align-items: center;
    padding: 0 1px 0 2px;
  }
  .trade svg:last-child { justify-self: end; }
  .detail-foot {
    height: 58px;
    flex-shrink: 0;
    background: #f3f3f3;
    color: #e0343c;
    font-size: 29px;
    line-height: 57px;
    text-align: center;
  }

  /* interaction */
  .interact {
    display: flex;
    height: 82px;
    margin: 22px 35px 0;
    justify-content: space-between;
    flex-shrink: 0;
  }
  .barrage {
    position: relative;
    display: flex;
    width: 601px;
    box-sizing: border-box;
    border: 2px solid #ededed;
    border-radius: 41px;
    background: linear-gradient(to right, #fff 117px, #f4f4f4 117px);
    line-height: 77px;
  }
  .barrage-toggle {
    position: relative;
    width: 117px;
    border-right: 2px solid #ededed;
    box-sizing: border-box;
    padding-left: 31px;
    font-size: 38px;
    line-height: 70px;
    font-weight: 900;
    color: #555;
  }
  .barrage-toggle svg {
    position: absolute;
    left: 58px;
    top: 38px;
  }
  .barrage-input {
    flex: 1;
    padding-left: 35px;
    font-size: 38px;
    color: #999;
  }
  .gift { margin: 21px 17px 0 0; }
  .badge {
    position: absolute;
    top: 7px;
    right: -3px;
    width: 12px;
    height: 12px;
    border-radius: 50%;
    background: #ee2a2e;
  }
  .vote {
    display: flex;
    width: 373px;
    font-size: 34.5px;
    line-height: 81px;
  }
  .vote-up {
    width: 189px;
    padding-left: 23px;
    box-sizing: border-box;
    color: #e5373c;
    border-radius: 41px 0 0 41px;
    background: linear-gradient(#feeae9, #fccfcb);
    clip-path: polygon(0 0, 100% 0, calc(100% - 9px) 100%, 0 100%);
  }
  .vote-down {
    width: 189px;
    margin-left: -5px;
    padding-left: 21px;
    box-sizing: border-box;
    color: #0aa650;
    border-radius: 0 41px 41px 0;
    background: linear-gradient(#dbf8e8, #9fecbd);
    clip-path: polygon(9px 0, 100% 0, 100% 100%, 0 100%);
  }

  .notice {
    display: flex;
    align-items: center;
    justify-content: space-between;
    height: 105px;
    margin: 21px 15px 0;
    padding: 0 38px 0 41px;
    border-radius: 17px;
    background: #d9e7fa;
    color: #4690e6;
    font-size: 41.3px;
    flex-shrink: 0;
  }
  .notice span { margin-top: -7px; }
  .notice svg {
    stroke: #4690e6;
    stroke-width: 3;
  }

  /* footer */
  .footer {
    margin-top: 19px;
    flex: 1;
    background: #262626;
    color: #e0e0e0;
  }
  .toolbar {
    display: grid;
    grid-template-columns: 248px repeat(4, 208px);
    font-size: 32.3px;
  }
  .sector {
    display: flex;
    flex-direction: column;
    align-items: center;
    padding: 12px 0 0;
    line-height: 60px;
    font-size: 32.8px;
    color: #85858f;
  }
  .sector span { margin-top: 4px; }
  .sector em {
    margin-top: -1px;
    font-style: normal;
    font-size: 35px;
    color: #f01212;
  }
  .action {
    display: flex;
    flex-direction: column;
    align-items: center;
    padding-top: 22px;
    line-height: 49px;
  }
  .action svg {
    fill: none;
    stroke: #d8d8d8;
    stroke-width: 2.6;
  }
  .sysnav {
    display: flex;
    height: 40px;
    margin-top: 43px;
    padding-left: 283px;
    fill: none;
    stroke: #aaa;
    stroke-width: 3.4;
  }
  .sysnav svg + svg { margin-left: 199px; }
  .sysnav svg:last-child { margin-left: 206px; }
</style>
